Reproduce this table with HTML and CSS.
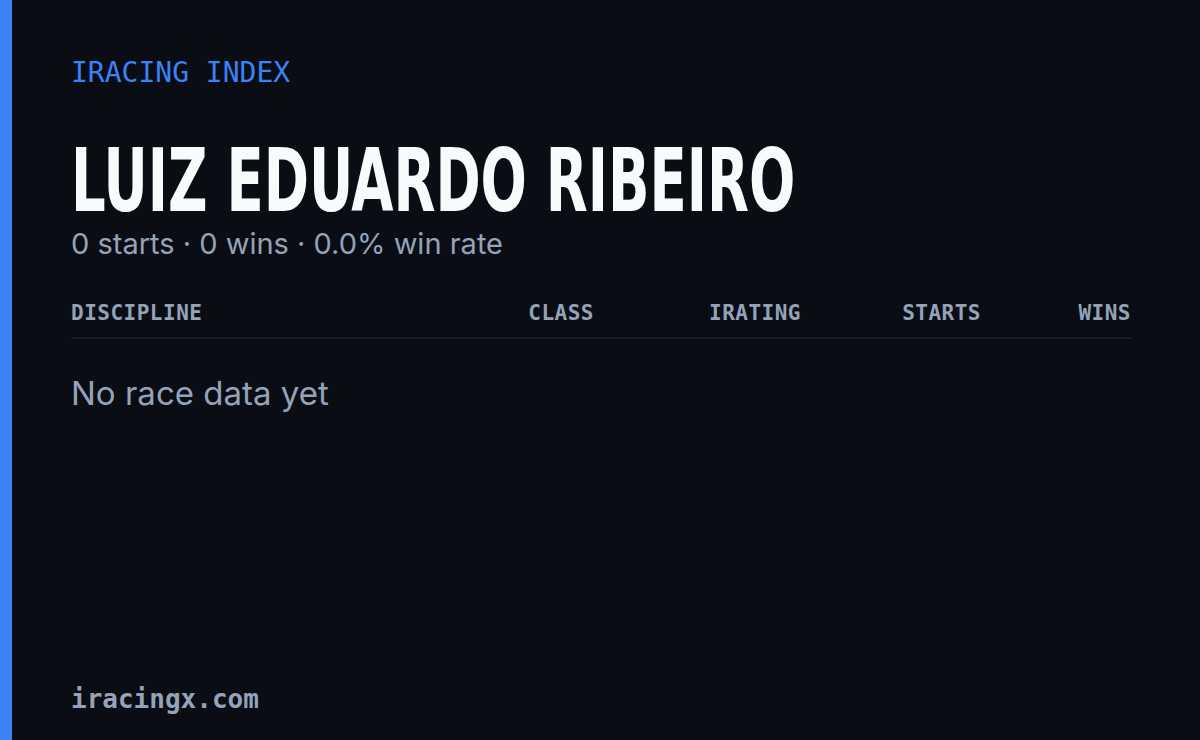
FILE: index.html
```html
<!doctype html>
<html lang="en">

<head>
  <meta charset="utf-8">
  <meta name="viewport" content="width=device-width, initial-scale=1.0">
  <title>iRacing Index - Luiz Eduardo Ribeiro</title>
  <link rel="stylesheet" href="styles.css">
</head>

<body>
  <div class="card">
    <div class="accent"></div>
    <div class="main">
      <div class="kicker">IRACING INDEX</div>

      <h1 class="name"><span>LUIZ EDUARDO RIBEIRO</span></h1>
      <div class="summary">0 starts · 0 wins · 0.0% win rate</div>

      <div class="table-head">
        <span class="col-left">DISCIPLINE</span>
        <span>CLASS</span>
        <span>IRATING</span>
        <span>STARTS</span>
        <span>WINS</span>
      </div>

      <div class="empty">No race data yet</div>

      <div class="footer">iracingx.com</div>
    </div>
  </div>
</body>
</html>
```

FILE: styles.css
```css
html {
  font-family: "Inter", sans-serif;
}

body {
  margin: 0;
  background-color: #0a0d14;
}

.card {
  display: flex;
  width: 1200px;
  height: 740px;
  background-color: #0a0d14;
}

.accent {
  width: 12px;
  flex-shrink: 0;
  background-color: #3b82f6; /* BLUE */
}

.main {
  flex: 1;
  display: flex;
  flex-direction: column;
  padding: 55px 69px 24px 59px;
}

.kicker {
  font-family: "DejaVu Sans Mono", monospace;
  font-size: 28px;
  font-weight: 400;
  color: #3b82f6;
  line-height: 36px;
}

.name {
  margin: 45px 0 0;
  font-family: "DejaVu Sans Condensed", sans-serif;
  font-size: 88px;
  font-weight: 700;
  line-height: 90px;
  color: #f8fafc;
  white-space: nowrap;
}

.name span {
  display: inline-block;
  transform-origin: left center;
  transform: scaleX(0.688);
}

.summary {
  font-size: 29px;
  line-height: 36px;
  color: #94a3b8;
}

.table-head {
  display: grid;
  grid-template-columns: 1fr 150px 207px 180px 150px;
  margin-top: 37px;
  padding-bottom: 10px;
  border-bottom: 2px solid #171b25;
  font-family: "DejaVu Sans Mono", monospace;
  font-size: 21px;
  font-weight: 700;
  letter-spacing: 0.5px;
  color: #94a3b8;
  line-height: 28px;
  text-align: right;
}

.table-head .col-left {
  text-align: left;
}

.empty {
  margin-top: 34px;
  font-size: 33px;
  line-height: 40px;
  color: #94a3b8;
}

.footer {
  margin-top: auto;
  font-family: "DejaVu Sans Mono", monospace;
  font-size: 26px;
  font-weight: 700;
  color: #94a3b8;
  line-height: 34px;
}
```
